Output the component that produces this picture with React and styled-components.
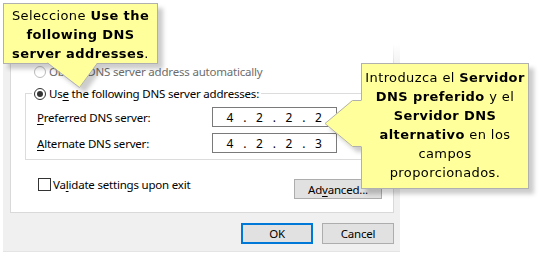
import React from 'react';
import styled, { createGlobalStyle } from 'styled-components';

const Global = createGlobalStyle`
  html, body { margin: 0; padding: 0; background: #fff; }
  body { width: 544px; height: 259px; overflow: hidden; }
`;

const Stage = styled.div`
  position: relative;
  width: 544px;
  height: 259px;
  background: #fff;
  overflow: hidden;
  font-family: "Noto Sans", "Segoe UI", sans-serif;
  font-size: 11.5px;
  letter-spacing: -0.2px;
  color: #000;
`;

const Dialog = styled.div`
  position: relative;
  margin-left: 3px;
  width: 397px;
  height: 252px;
  box-sizing: border-box;
  padding: 0 6px 0 7px;
  background: #f0f0f0;
  border-bottom: 1px solid #e4e4e4;
  display: flex;
  flex-direction: column;
`;

const Fade = styled.div`
  position: absolute;
  left: 0;
  right: 0;
  top: 0;
  height: 68px;
  background: linear-gradient(#fff 0, #fff 65%, rgba(255,255,255,0) 100%);
  pointer-events: none;
`;

const Panel = styled.div`
  height: 213px;
  box-sizing: border-box;
  background: #fff;
  border: 1px solid #d9d9d9;
  border-top: none;
  padding: 64px 11px 0 14px;
  display: flex;
  flex-direction: column;
`;

const RadioRow = styled.label`
  display: flex;
  align-items: center;
  gap: 3px;
  height: 15px;
  margin-left: ${p => p.$indent || 0}px;
  color: ${p => (p.$disabled ? '#6d6d6d' : '#000')};
  white-space: nowrap;
`;

const Radio = styled.span`
  position: relative;
  width: 12px;
  height: 12px;
  box-sizing: border-box;
  border-radius: 50%;
  border: 1px solid ${p => (p.$disabled ? '#bcbcbc' : '#333')};
  background: #fff;
  flex: none;
  &::after {
    content: '';
    display: ${p => (p.$checked ? 'block' : 'none')};
    position: absolute;
    left: 2px;
    top: 2px;
    width: 6px;
    height: 6px;
    border-radius: 50%;
    background: #333;
  }
`;

const Key = styled.span`
  text-decoration: underline;
  text-underline-offset: 2px;
`;

const Group = styled.fieldset`
  margin: 7px 0 0 0;
  width: 357px;
  box-sizing: border-box;
  border: 1px solid #dcdcdc;
  padding: 6px 0 6px 6px;
  display: flex;
  flex-direction: column;
  gap: 6px;
`;

const Legend = styled.legend`
  padding: 0 2px;
  height: 15px;
`;

const FieldRow = styled.div`
  display: flex;
  align-items: center;
  height: 20px;
  padding-left: 5px;
`;

const FieldLabel = styled.span`
  width: 175px;
  flex: none;
`;

const IpBox = styled.div`
  width: 125px;
  height: 20px;
  box-sizing: border-box;
  border: 1px solid #7a7a7a;
  background: #fff;
  display: flex;
  align-items: center;
  padding-left: 11px;
  font-size: 12px;
  letter-spacing: 0;
`;

const Octet = styled.span`
  width: 12px;
  text-align: center;
`;

const Dot = styled.span`
  width: 17.5px;
  text-align: center;
`;

const OptionRow = styled.div`
  display: flex;
  align-items: flex-start;
  margin-top: 18px;
  padding-left: 13px;
`;

const CheckLabel = styled.label`
  display: flex;
  align-items: center;
  gap: 2px;
  height: 13px;
  white-space: nowrap;
`;

const Check = styled.span`
  width: 13px;
  height: 13px;
  box-sizing: border-box;
  border: 1px solid #333;
  background: #fff;
  flex: none;
`;

const Button = styled.button`
  width: ${p => p.$w || 72}px;
  height: ${p => p.$h || 21}px;
  margin: ${p => p.$m || 0};
  box-sizing: border-box;
  padding: 0;
  font: inherit;
  letter-spacing: inherit;
  color: #000;
  background: #e1e1e1;
  border: ${p => (p.$primary ? '2px solid #0078d7' : '1px solid #adadad')};
  flex: none;
`;

const Footer = styled.div`
  display: flex;
  justify-content: flex-end;
  gap: 9px;
  margin-top: 10px;
`;

const Callout = styled.div`
  position: absolute;
  left: ${p => p.$x}px;
  top: ${p => p.$y}px;
  width: ${p => p.$w}px;
  height: ${p => p.$h}px;
  filter: drop-shadow(5px 5px 2px rgba(0, 0, 0, 0.2));
`;

const Bubble = styled.div`
  width: 100%;
  height: 100%;
  box-sizing: border-box;
  background: #ffff9c;
  border: 1px solid #b0b0b0;
  padding-top: ${p => p.$pt}px;
  font-family: "DejaVu Sans", Verdana, sans-serif;
  font-size: 13px;
  line-height: 19px;
  letter-spacing: 0.4px;
  text-align: center;
  color: #000;
  b { font-weight: bold; }
`;

const Pointer = styled.svg`
  position: absolute;
  left: ${p => p.$x}px;
  top: ${p => p.$y}px;
  overflow: visible;
`;

const Ip = ({ parts }) => (
  <IpBox>
    {parts.map((n, i) => (
      <React.Fragment key={i}>
        {i > 0 && <Dot>.</Dot>}
        <Octet>{n}</Octet>
      </React.Fragment>
    ))}
  </IpBox>
);

export default function App() {
  return (
    <Stage>
      <Global />
      <Dialog>
        <Panel>
          <RadioRow $indent={9} $disabled>
            <Radio $disabled />
            <span>Obtain DNS server address automatically</span>
          </RadioRow>
          <Group>
            <Legend>
              <RadioRow>
                <Radio $checked />
                <span>Us<Key>e</Key> the following DNS server addresses:</span>
              </RadioRow>
            </Legend>
            <FieldRow>
              <FieldLabel><Key>P</Key>referred DNS server:</FieldLabel>
              <Ip parts={[4, 2, 2, 2]} />
            </FieldRow>
            <FieldRow>
              <FieldLabel><Key>A</Key>lternate DNS server:</FieldLabel>
              <Ip parts={[4, 2, 2, 3]} />
            </FieldRow>
          </Group>
          <OptionRow>
            <CheckLabel>
              <Check />
              <span>Va<Key>l</Key>idate settings upon exit</span>
            </CheckLabel>
            <Button $w={88} $h={20} $m="1px 0 0 auto">Ad<Key>v</Key>anced...</Button>
          </OptionRow>
        </Panel>
        <Footer>
          <Button $primary>OK</Button>
          <Button>Cancel</Button>
        </Footer>
        <Fade />
      </Dialog>

      <Callout $x={3} $y={3} $w={155} $h={61}>
        <Bubble $pt={2}>
          Seleccione <b>Use the</b>
          <br />
          <b>following DNS</b>
          <br />
          <b>server addresses</b>.
        </Bubble>
        <Pointer $x={44} $y={59} width="52" height="27" viewBox="0 0 52 27">
          <polygon points="0,0 51,0 33,25.5" fill="#ffff9c" />
          <polyline points="0.5,1 32.5,25.5 50.5,1" fill="none" stroke="#b0b0b0" strokeWidth="1" />
        </Pointer>
      </Callout>

      <Callout $x={361} $y={63} $w={168} $h={126}>
        <Bubble $pt={4}>
          Introduzca el <b>Servidor</b>
          <br />
          <b>DNS preferido</b> y el
          <br />
          <b>Servidor DNS</b>
          <br />
          <b>alternativo</b> en los
          <br />
          campos
          <br />
          proporcionados.
        </Bubble>
        <Pointer $x={-37} $y={36} width="39" height="50" viewBox="0 0 39 50">
          <polygon points="39,1 28,1 1,24.5 28,48 39,48" fill="#ffff9c" />
          <polyline points="37.5,1.5 28.5,1.5 1,24.5 28.5,47.5 37.5,47.5" fill="none" stroke="#b0b0b0" strokeWidth="1" />
        </Pointer>
      </Callout>
    </Stage>
  );
}
